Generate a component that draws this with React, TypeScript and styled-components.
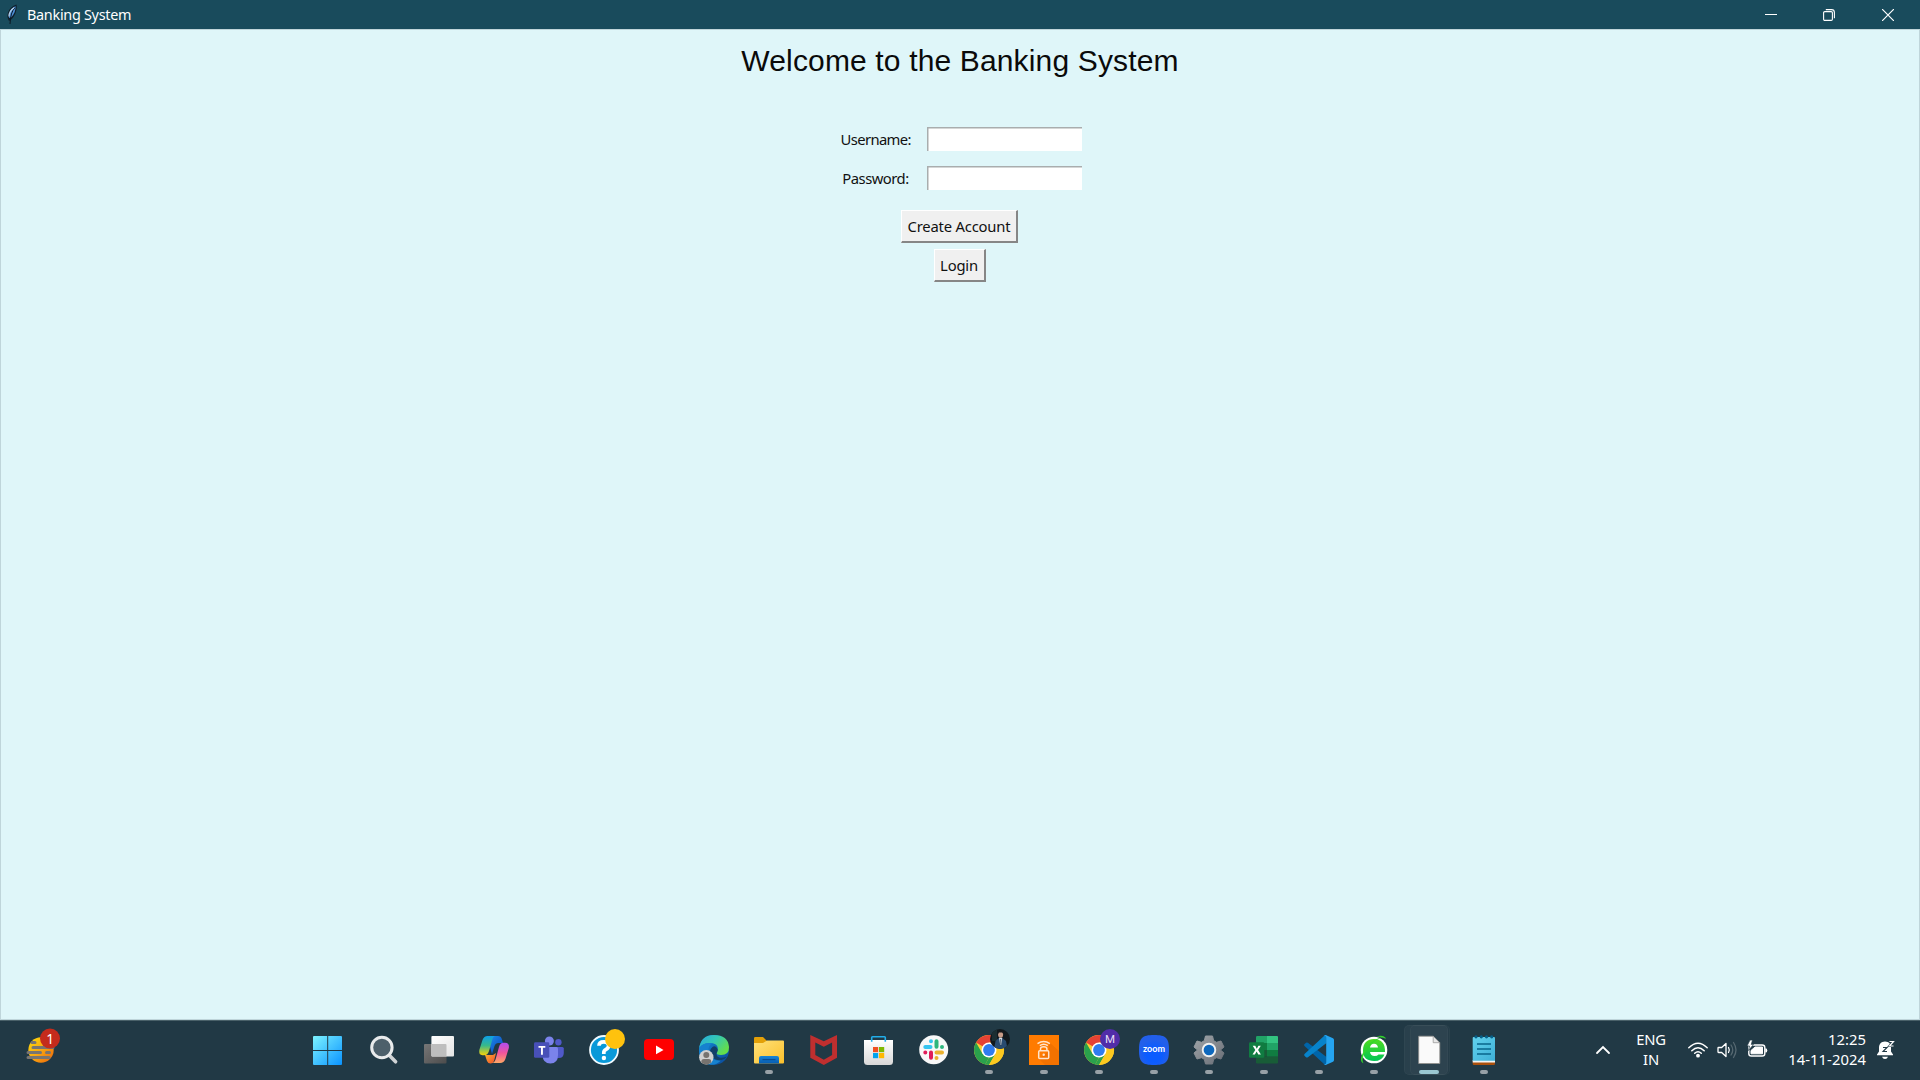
import React from 'react';
import styled, { createGlobalStyle } from 'styled-components';

const Global = createGlobalStyle`
  * { box-sizing: border-box; }
  body { margin: 0; overflow: hidden; background: #dff6f9; }
`;

const ui = '"Noto Sans", "Open Sans", sans-serif';

const Desktop = styled.div`
  width: 1920px;
  height: 1080px;
  display: flex;
  flex-direction: column;
  font-family: ${ui};
`;

const TitleBar = styled.header`
  height: 29px;
  flex: none;
  display: flex;
  align-items: center;
  background: #194b5c;
  color: #fff;
  padding: 0 3px 0 5px;
`;

const WindowTitle = styled.span`
  margin-left: 8px;
  flex: 1;
  font-size: 14.4px;
  line-height: 20px;
  letter-spacing: -0.28px;
`;

const Caption = styled.button`
  width: 58.5px;
  height: 28px;
  border: 0;
  padding: 0;
  background: none;
  display: flex;
  align-items: center;
  justify-content: center;
`;

const Client = styled.main`
  flex: 1;
  display: flex;
  flex-direction: column;
  align-items: center;
  background: #dff6f9;
  border: 1px solid #bfd5da;
`;

const Heading = styled.h1`
  margin: 13px 0 0;
  height: 36px;
  font: 400 30px/36px "Liberation Sans", Arial, sans-serif;
  letter-spacing: 0.15px;
  color: #0a0a0a;
`;

const Form = styled.form`
  display: grid;
  grid-template-columns: 70px 155px;
  column-gap: 16px;
  row-gap: 15px;
  margin: 48px 0 20px 2px;
`;

const Label = styled.label<{ $spacing: number }>`
  height: 24px;
  text-align: center;
  font-size: 14.8px;
  line-height: 24px;
  letter-spacing: ${p => p.$spacing}px;
  white-space: nowrap;
  color: #111;
`;

const Field = styled.input`
  width: 155px;
  height: 24px;
  padding: 0 3px;
  border: 0;
  border-radius: 0;
  outline: 0;
  background: #fff;
  box-shadow: inset 1.5px 1.5px 0 #a9adae;
`;

const PushButton = styled.button<{ $width: number }>`
  width: ${p => p.$width}px;
  height: 33px;
  margin: 0 1px 6px 0;
  padding: 0 0 1px;
  border: solid;
  border-width: 1px 2px 2px 1px;
  border-color: #fff #868686 #868686 #fff;
  background: #f0f0f0;
  font: 14.8px/20px ${ui};
  letter-spacing: -0.2px;
  white-space: nowrap;
  color: #111;
`;

const Taskbar = styled.footer`
  height: 60px;
  flex: none;
  display: flex;
  align-items: stretch;
  background: #213945;
  border-top: 1px solid #4a6169;
  color: #fff;
`;

const Widgets = styled.div`
  width: 301px;
  padding: 7px 0 0 25px;
`;

const Apps = styled.nav`
  display: flex;
  flex: 1;
`;

const Slot = styled.div`
  width: 55px;
  position: relative;
  padding: 14px 0 0 13px;
`;

const ActiveTile = styled.span<{ $back?: boolean }>`
  position: absolute;
  left: ${p => (p.$back ? 9 : 3)}px;
  top: 4px;
  width: ${p => (p.$back ? 40 : 44)}px;
  height: 50px;
  border-radius: 5px;
  background: rgba(255, 255, 255, ${p => (p.$back ? 0.02 : 0.04)});
  box-shadow: inset 0 0 0 1px rgba(255, 255, 255, 0.03);
`;

const Indicator = styled.span<{ $active?: boolean }>`
  display: block;
  position: relative;
  margin: 5px 0 0 ${p => (p.$active ? 5 : 11)}px;
  width: ${p => (p.$active ? 20 : 8)}px;
  height: 4px;
  border-radius: 2px;
  background: ${p => (p.$active ? '#9ac7d1' : '#98a1a7')};
`;

const Art = styled.svg`
  display: block;
  position: relative;
  overflow: visible;
`;

const Tray = styled.div`
  display: flex;
  padding-right: 25px;
`;

const TrayItem = styled.div<{ $w: number; $top: number; $gap?: number }>`
  width: ${p => p.$w}px;
  margin-left: ${p => p.$gap || 0}px;
  padding-top: ${p => p.$top}px;
`;

const TrayText = styled.div<{ $w: number; $right?: boolean }>`
  width: ${p => p.$w}px;
  padding-top: 8px;
  text-align: ${p => (p.$right ? 'right' : 'center')};
  font-size: 14.8px;
  line-height: 20px;
  letter-spacing: ${p => (p.$right ? 0.05 : -0.2)}px;
  white-space: nowrap;
`;

const Icon = ({ children }: { children: React.ReactNode }) => (
  <Art width="30" height="30" viewBox="0 0 30 30">{children}</Art>
);

const Gradient = ({ id, a, b, m, d = '1,1' }: { id: string; a: string; b: string; m?: string; d?: string }) => (
  <linearGradient id={id} x1="0" y1="0" x2={d.split(',')[0]} y2={d.split(',')[1]}>
    <stop offset="0" stopColor={a} />
    {m && <stop offset=".5" stopColor={m} />}
    <stop offset="1" stopColor={b} />
  </linearGradient>
);

const Start = () => (
  <Icon>
    <defs>
      <linearGradient id="win" gradientUnits="userSpaceOnUse" x1="-1" y1="1" x2="28" y2="30">
        <stop offset="0" stopColor="#7df3ff" /><stop offset="1" stopColor="#0a93ff" />
      </linearGradient>
    </defs>
    <path fill="url(#win)" d="M0 1h13.200v14H-1V2q0-1 1-1zM14.200 1H27q1 0 1 1v13H14.200zM-1 16h14.200v14H0q-1 0-1-1zM14.200 16H28v13q0 1-1 1H14.200z" />
  </Icon>
);

const Search = () => (
  <Icon>
    <path d="M20.5 20.5L26.6 26.8" stroke="#d0d3d5" strokeWidth="3.6" strokeLinecap="round" />
    <circle cx="12.9" cy="12.5" r="10.2" fill="#4d606b" stroke="#e9ebec" strokeWidth="3" />
  </Icon>
);

const TaskView = () => (
  <Icon>
    <defs><Gradient id="tv1" a="#fff" b="#e4e4e4" /><Gradient id="tv2" a="#777" b="#4c4c4c" /></defs>
    <rect y="9" width="22.5" height="19.6" rx="1" fill="url(#tv2)" />
    <rect x="7.4" y="1" width="22.6" height="20.4" rx="1" fill="url(#tv1)" />
    <path d="M7.4 9h14.1q1 0 1 1v11.4H8.4q-1 0-1-1z" fill="#bebebe" />
  </Icon>
);

const Copilot = () => (
  <Icon>
    <defs>
      <Gradient id="cp1" a="#0d9fe8" m="#38b98a" b="#f9d109" d="0,1" />
      <Gradient id="cp2" a="#b04df0" m="#f2549b" b="#ffa764" d="0,1" />
      <Gradient id="cp3" a="#1c90ee" b="#0a40b8" />
      <Gradient id="cp4" a="#ffb52e" b="#ef4a2c" />
    </defs>
    <path fill="url(#cp3)" d="M8 1h11q3 0 3.800 3l1.200 4h-4.500q-3 0-4 3L13 19z" />
    <path fill="url(#cp4)" d="M6 20h8l3-2-2 8q-1 2.500-3.500 2.500T8 26z" />
    <path fill="url(#cp1)" d="M8.500 1h8q-2.300 0-3.300 4L10 16q-1.200 4.200-5 4.200H3.600Q-.5 20.200.3 15L3.500 5Q5 1 8.500 1z" />
    <path fill="url(#cp2)" d="M21 28H12.700q2.800 0 4-4L20 12q1.200-4.200 4.500-4.200H26q4.500 0 3.900 5L26.400 24Q25 28 21 28z" />
  </Icon>
);

const Teams = () => (
  <Icon>
    <circle cx="24.400" cy="7.300" r="3.200" fill="#5059c9" />
    <path d="M21 12h7.300q1.500 0 1.500 1.500V18q0 5-5 5H21z" fill="#5059c9" />
    <circle cx="15.400" cy="6" r="4.500" fill="#7b83eb" />
    <path d="M9 12h13.500q1.500 0 1.500 1.500V20q0 8.500-7.600 8.500T8.500 20z" fill="#7b83eb" />
    <rect y="7.300" width="15.300" height="15.500" rx="1.400" fill="#4850b8" />
    <path d="M4.500 11h6.800v1.800H8.900v7H7v-7H4.500z" fill="#fff" />
  </Icon>
);

const Help = () => (
  <Icon>
    <circle cx="15" cy="15" r="14" fill="#0999d9" stroke="#f2fbff" strokeWidth="1.800" />
    <path d="M10 10.800q0-4 4.800-4t4.800 4q0 2.200-2.500 3.500T14.800 18v1" fill="none" stroke="#fff" strokeWidth="3.700" />
    <circle cx="14.900" cy="23" r="2.200" fill="#fff" />
    <circle cx="26" cy="4" r="10" fill="#ffc20e" />
  </Icon>
);

const YouTube = () => (
  <Icon><rect y="4" width="30" height="21" rx="4" fill="#fe0000" /><path d="M12 10.500v8.800l7.500-4.400z" fill="#fff" /></Icon>
);

const Edge = () => (
  <Icon>
    <defs><Gradient id="ed1" a="#27a9e1" m="#34c8b4" b="#65de48" d="1,.6" /><Gradient id="ed2" a="#1591dc" b="#0a4697" /></defs>
    <circle cx="15" cy="15" r="15" fill="url(#ed2)" />
    <path d="M.2 13Q2 0 15 0q14 0 15 12 .2 8-8 8-4.500 0-4.500-2.200c0-1 1.300-1.500 1.300-4C18.800 9.500 15 8 11 8 5 8 1.500 11 .2 13z" fill="url(#ed1)" />
    <path d="M.2 13C3 8.500 9 7 13.500 8.500 9 10 8.500 16 11 20c2.500 4.500 6 6 11 5.500-5 5.500-14 6-19 0Q-.5 20 .2 13z" fill="#1682cf" />
    <path d="M13.500 12q-4 3-1.500 8 3 5.500 10 5.200 3.500-.5 6-3.700-10 3.500-10.500-2.500c0-1.500 1.300-2 1.300-4.500q-2.300-5-5.300-2.500z" fill="#123f69" />
    <circle cx="7.300" cy="22.300" r="7.200" fill="#d0d0d0" />
    <circle cx="7.300" cy="20" r="3" fill="#77736f" /><path d="M2.300 27.400Q2 24 5 24h4.600q3 0 2.700 3.400-5 4-10 0z" fill="#77736f" />
  </Icon>
);

const Explorer = () => (
  <Icon>
    <defs><Gradient id="fx" a="#ffe17a" b="#fbc02b" /><Gradient id="fb" a="#1685d8" b="#075cb0" d="0,1" /></defs>
    <path d="M0 3.200Q0 2 1.200 2H9l3.500 3.500V10H0z" fill="#e3a008" />
    <path d="M0 8h9l4-2.500h16q1 0 1 1v21q0 1-1 1H1q-1 0-1-1z" fill="url(#fx)" />
    <path d="M5 28.500V23q0-2 2-2h16q2 0 2 2v5.500z" fill="url(#fb)" /><path d="M8.500 24.700h13" stroke="#07458b" strokeWidth="1" />
  </Icon>
);

const McAfee = () => (
  <Icon><path fillRule="evenodd" fill="#c02f2f" d="M1.300 0L14.800 6.300 28 0v22.800L14.800 30 1.300 22.800zM6.300 7.600v12.500l8.500 4.600 8.300-4.600V7.600l-8.300 4.200z" /></Icon>
);

const Store = () => (
  <Icon>
    <defs><Gradient id="st" a="#fff" b="#d8d8d8" d="0,1" /></defs>
    <path d="M0 5h29v21.500q0 3.500-3.500 3.500h-22Q0 30 0 26.500z" fill="url(#st)" />
    <path d="M7.700 6.800V2.500q0-.8.800-.8h12q.8 0 .8.800v4.300" fill="none" stroke="#22aeea" strokeWidth="1.600" />
    <path d="M9 12h5.200v5.200H9z" fill="#f05022" /><path d="M15 12h5.200v5.200H15z" fill="#7eb902" />
    <path d="M9 18h5.200v5.200H9z" fill="#00a3ee" /><path d="M15 18h5.200v5.200H15z" fill="#ffb801" />
  </Icon>
);

const Slack = () => (
  <Icon>
    <circle cx="14.700" cy="14.700" r="14.500" fill="#f8f8f8" />
    <g strokeLinecap="round" strokeWidth="4">
      <path d="M6.300 12h5.200M12 6.300h0" stroke="#36c5f0" /><path d="M17.500 6.300v5.500M23 12h0" stroke="#2eb67d" />
      <path d="M12 17.500v5.300M6.300 17.500h0" stroke="#e01e5a" /><path d="M17.500 17.500H23M17.500 23h0" stroke="#ecb22e" />
    </g>
  </Icon>
);

const ChromeBase = () => (
  <>
    <circle cx="15" cy="15" r="15" fill="#ffcd35" />
    <path d="M15 15L2.010 7.500A15 15 0 0 1 27.990 7.500H15z" fill="#e64234" />
    <path d="M15 15V22.500L11.250 29.500A15 15 0 0 1 2.010 7.500L8.500 18.750z" fill="#2aa14c" />
    <path d="M11.250 29.500A15 15 0 0 0 15 30L21.500 18.750 15 22.500z" fill="#2aa14c" />
    <path d="M15 7.500h13A15 15 0 0 1 15 30l6.500-11.250z" fill="#fcc91f" />
    <circle cx="15" cy="15" r="7.500" fill="#fff" /><circle cx="15" cy="15" r="5.900" fill="#2f7cee" />
  </>
);

const ChromePhoto = () => (
  <Icon>
    <ChromeBase />
    <clipPath id="photo"><circle cx="26" cy="4" r="10" /></clipPath>
    <g clipPath="url(#photo)">
      <path d="M16-6h20v20H16z" fill="#10191e" /><path d="M18-5h5v11h-5z" fill="#1b2e32" />
      <path d="M20 14l1.500-8L25 2.800h3L32 6l1.500 8z" fill="#284b70" />
      <path d="M25 2.800h3.200L27.400 10h-1.200z" fill="#d5dfe7" /><path d="M26.300 4h.8l.3 6-.8 1z" fill="#26384b" />
      <ellipse cx="26.600" cy="-.5" rx="2.500" ry="3.300" fill="#c79c88" /><path d="M24-1q0-3.700 2.700-3.700T29.200-1l-1-1.500h-3z" fill="#15171a" />
    </g>
  </Icon>
);

const ChromeM = () => (
  <Icon>
    <ChromeBase /><circle cx="26" cy="4" r="10" fill="#512da8" />
    <text x="26" y="8.200" textAnchor="middle" fontFamily="Roboto, sans-serif" fontSize="11.500" fill="#e4dcf5">M</text>
  </Icon>
);

const Authenticator = () => (
  <Icon>
    <path d="M0 0h30v30H0z" fill="#ff7b00" /><path d="M20 7l10 9v14H16l-6-6 10-8z" fill="#f27200" />
    <g fill="none" stroke="#ffe5cc" strokeWidth="1.500">
      <rect x="9.700" y="15.700" width="10" height="7.700" rx="1" /><path d="M11.500 15.500v-1.700q0-2 3.200-2t3.200 2v1.700" />
      <path d="M10.800 10.700q4-2.800 8 0M8.500 8.700q6.200-4.200 12.400 0" />
    </g><circle cx="14.700" cy="19.700" r="1.200" fill="#ffe5cc" />
  </Icon>
);

const Zoom = () => (
  <Icon>
    <defs><radialGradient id="zm" cy=".65"><stop offset=".5" stopColor="#0b5cff" /><stop offset="1" stopColor="#225fea" /></radialGradient></defs>
    <path d="M15 0c12 0 15 3 15 15s-3 15-15 15S0 27 0 15 3 0 15 0z" fill="url(#zm)" />
    <text x="15" y="17" textAnchor="middle" textLength="22" lengthAdjust="spacingAndGlyphs" fontFamily="Lato, sans-serif" fontSize="8.800" fontWeight="700" fill="#fff">zoom</text>
  </Icon>
);

const Settings = () => (
  <Icon>
    <defs><Gradient id="gr" a="#a1a6aa" b="#686d75" /></defs>
    <path d="M11.500 1h7l1.200 4.700 2.800 1.600L27 6l3 6-3.500 3L30 18l-3 6-4.500-1.300-2.800 1.600L18.500 29h-7l-1.200-4.700-2.800-1.600L3 24l-3-6 3.500-3L0 12l3-6 4.500 1.300 2.800-1.600z" fill="url(#gr)" stroke="url(#gr)" strokeWidth="1" strokeLinejoin="round" />
    <circle cx="15" cy="15" r="6.300" fill="#0e68bd" stroke="#f0f1f1" strokeWidth="1.900" />
  </Icon>
);

const Excel = () => (
  <Icon>
    <path d="M8.200 1H18v7H7V2.200Q7 1 8.200 1z" fill="#21a366" /><path d="M18 1h10q1 0 1 1v6H18z" fill="#33c481" />
    <path d="M7 8h11v7H7z" fill="#107c41" /><path d="M18 8h11v7H18z" fill="#21a366" />
    <path d="M7 15h11v6.700H7z" fill="#185c37" /><path d="M18 15h11v6.700H18z" fill="#107c41" />
    <path d="M7 21.700h22v5.500q0 1.200-1.200 1.200H8.200Q7 28.400 7 27.200z" fill="#185c37" />
    <rect y="7.300" width="15.300" height="15.500" rx="1.300" fill="#107c41" />
    <path d="M3.700 10.700h2.600l1.500 3 1.600-3h2.400l-2.700 4.400 2.800 4.500H9.300l-1.700-3-1.700 3H3.500l2.800-4.500z" fill="#fff" />
  </Icon>
);

const VSCode = () => (
  <Icon>
    <path d="M.5 9.300L2 7.800q.9-.7 1.900 0L22.500 22v7.700Q21 29.900 20 29L.5 11.100q-.8-.9 0-1.800z" fill="#0065a9" />
    <path d="M.5 20.700L2 22.200q.9.700 1.900 0L22.500 8V.3Q21 .1 20 1L.5 18.900q-.8.900 0 1.800z" fill="#0783cb" />
    <path d="M22.200.2L29 3.300q1 .6 1 1.800v19.800q0 1.200-1 1.800l-6.800 3.100q-1.500.4-2.500-.9 2.500 1 2.500-1.400v-25q0-2.300-2.500-1.400 1-1.300 2.500-.9z" fill="#25a5f1" />
  </Icon>
);

const GreenE = () => (
  <Icon>
    <defs><Gradient id="ge" a="#50db1f" b="#00c655" d="0,1" /></defs>
    <circle cx="15" cy="15" r="13.300" fill="#fff" />
    <path fillRule="evenodd" fill="url(#ge)" d="M4 15.500C4 8 8.300 4 15 4c7.500 0 11.500 5 11 13H11q.7 4 4.500 4 2.800 0 4-1.600h6Q23 26 15.300 26 4 26 4 15.500zM11 12.500h8q-.5-3.800-4-3.800t-4 3.800z" />
    <path d="M4.500 28.200C.5 27 1.500 21 6 14.500 12 6 20 .8 27.500 2.500 20 2 13 7 8 14c-4 6-5.500 11-3.500 14.200z" fill="#31d52b" />
    <path d="M17 1.500q8-2.500 10 2.500Q23 1 17 1.500z" fill="#31d52b" />
  </Icon>
);

const FileIcon = () => (
  <Icon>
    <path d="M4.700 1.200h14.600l6.500 6.500v20.800H4.700z" fill="#fafafa" stroke="#92908d" strokeWidth=".8" />
    <path d="M19.200 1.200v6.500h6.500z" fill="#e7e7e7" stroke="#999" strokeWidth=".8" />
  </Icon>
);

const Notepad = () => (
  <Icon>
    <defs><Gradient id="np" a="#62d2ee" b="#3eafd6" /></defs>
    <path d="M3.700 26h22.300v2.800q0 1.200-1.200 1.200H5q-1.300 0-1.300-1.200z" fill="#aa500c" /><path d="M3.700 25h22.300v2.500H3.700z" fill="#f0f4f5" />
    <path d="M4.700 2h20.300q1 0 1 1v22.800H3.700V3q0-1 1-1z" fill="url(#np)" />
    <path d="M7 1.800h0M12.300 1.800h0M17.500 1.800h0M22.700 1.800h0" stroke="#075f87" strokeWidth="3.200" strokeLinecap="round" />
    <path d="M8 9h14M8 14h14M8 19h14" stroke="#08658c" strokeWidth="1.700" />
  </Icon>
);

type TaskbarApp = { name: string; Art: () => React.ReactElement; running?: boolean; active?: boolean };
const apps: TaskbarApp[] = [
  { name: 'start', Art: Start }, { name: 'search', Art: Search }, { name: 'taskview', Art: TaskView },
  { name: 'copilot', Art: Copilot }, { name: 'teams', Art: Teams }, { name: 'help', Art: Help },
  { name: 'youtube', Art: YouTube }, { name: 'edge', Art: Edge }, { name: 'explorer', Art: Explorer, running: true },
  { name: 'mcafee', Art: McAfee }, { name: 'store', Art: Store }, { name: 'slack', Art: Slack },
  { name: 'chrome', Art: ChromePhoto, running: true }, { name: 'auth', Art: Authenticator, running: true },
  { name: 'chrome-m', Art: ChromeM, running: true }, { name: 'zoom', Art: Zoom, running: true },
  { name: 'settings', Art: Settings, running: true }, { name: 'excel', Art: Excel, running: true },
  { name: 'vscode', Art: VSCode, running: true }, { name: 'browser', Art: GreenE, running: true },
  { name: 'file', Art: FileIcon, running: true, active: true }, { name: 'notepad', Art: Notepad, running: true },
];

const Feather = () => (
  <svg width="14" height="22" viewBox="0 0 14 22">
    <path d="M4 17C.5 12 3 3 11.500.5c1 5-1.500 12.500-6 15.500z" fill="#10202c" />
    <path d="M4 14Q3.500 6 10.500 2q.5 6.500-4.500 11.500z" fill="#4d8fd8" />
    <path d="M9.800 4Q5.500 8 5 20" fill="none" stroke="#0b1722" strokeWidth="1" />
    <path d="M4 12.500Q4 7 9 3.800" fill="none" stroke="#b6d3ee" strokeWidth="1.300" />
  </svg>
);

export default function App() {
  return (
    <Desktop>
      <Global />
      <TitleBar>
        <Feather />
        <WindowTitle>Banking System</WindowTitle>
        <Caption><svg width="12" height="12"><path d="M0 5.500h12" stroke="#fff" /></svg></Caption>
        <Caption>
          <svg width="12" height="12" fill="none" stroke="#fff" strokeWidth="1.100">
            <path d="M2.800.6h5.700q2.900 0 2.900 2.900v5.700" /><rect x=".6" y="2.600" width="8.800" height="8.800" rx="1.200" />
          </svg>
        </Caption>
        <Caption><svg width="12" height="12"><path d="M0 0l12 12M12 0L0 12" stroke="#fff" strokeWidth="1.200" /></svg></Caption>
      </TitleBar>
      <Client>
        <Heading>Welcome to the Banking System</Heading>
        <Form>
          <Label htmlFor="user" $spacing={-0.62}>Username:</Label><Field id="user" />
          <Label htmlFor="pass" $spacing={-0.5}>Password:</Label><Field id="pass" type="password" />
        </Form>
        <PushButton $width={117}>Create Account</PushButton>
        <PushButton $width={52}>Login</PushButton>
      </Client>
      <Taskbar>
        <Widgets>
          <Art width="36" height="36" viewBox="0 0 36 36">
            <defs><Gradient id="sun" a="#ffdf08" m="#f9a610" b="#e9620b" /></defs>
            <circle cx="16" cy="22" r="12.700" fill="url(#sun)" />
            <path d="M7 14.500h3M8 19.500h20M3 24.500h12.500M21.500 24.500h3M3 29.500h21" stroke="#797571" strokeWidth="3" strokeLinecap="round" />
            <circle cx="25" cy="10.500" r="10" fill="#c42b1c" />
            <text x="25.200" y="15.600" textAnchor="middle" fontFamily="Noto Sans, sans-serif" fontSize="13.800" fill="#fff">1</text>
          </Art>
        </Widgets>
        <Apps>
          {apps.map(a => (
            <Slot key={a.name}>
              {a.active && <><ActiveTile $back /><ActiveTile /></>}
              <a.Art />
              {a.running && <Indicator $active={a.active} />}
            </Slot>
          ))}
        </Apps>
        <Tray>
          <TrayItem $w={34} $top={24}>
            <Art width="14" height="9" viewBox="0 0 14 9"><path d="M1 8l6-6 6 6" fill="none" stroke="#fff" strokeWidth="1.800" strokeLinecap="round" /></Art>
          </TrayItem>
          <TrayText $w={42}>ENG<br />IN</TrayText>
          <TrayItem $w={29} $top={20} $gap={16}>
            <Art width="20" height="17" viewBox="0 0 20 17">
              <path d="M.8 6.800q9.200-9 18.400 0M3.800 9.700q6.200-6 12.400 0M6.700 12.300q3.300-3.200 6.600 0" fill="none" stroke="#fff" strokeWidth="1.500" strokeLinecap="round" />
              <circle cx="10" cy="14.700" r="1.900" fill="#fff" />
            </Art>
          </TrayItem>
          <TrayItem $w={30} $top={20}>
            <Art width="21" height="18" viewBox="0 0 21 18" fill="none" strokeWidth="1.300" strokeLinecap="round" strokeLinejoin="round">
              <path d="M1.500 6.500h3.200L9 2.500v13l-4.300-4H1.500q-.5 0-.5-.5V7q0-.5.500-.5zM11.500 6.500q1.600 2.500 0 5" stroke="#fff" />
              <path d="M14 4q3.500 5 0 10M16.500 1.500q5 7.500 0 15" stroke="#566871" />
            </Art>
          </TrayItem>
          <TrayItem $w={37} $top={19}>
            <Art width="20" height="18" viewBox="0 0 20 18">
              <rect x="1.800" y="5" width="16" height="11" rx="2.600" fill="none" stroke="#fff" strokeWidth="1.400" />
              <path d="M4 13.800V10.500l4-3.500h7.500v6.800z" fill="#fff" stroke="#fff" strokeLinejoin="round" />
              <path d="M18.300 8.200q2 0 2 2.200t-2 2.200z" fill="#fff" />
              <path d="M3 0L0 6h2.500L1.500 10.500 6.500 4.500H4.300L5.500 0z" fill="#fff" stroke="#213945" strokeWidth=".7" />
            </Art>
          </TrayItem>
          <TrayText $w={82} $right>12:25<br />14-11-2024</TrayText>
          <TrayItem $w={18} $top={19} $gap={11}>
            <Art width="18" height="20" viewBox="0 0 18 20">
              <path d="M8 1.500c4 0 6 2.800 6 6v4l2 3v.8H0v-.8l2-3v-4c0-3.200 2-6 6-6z" fill="#fff" /><path d="M5 16.800h6q-.8 2.300-3 2.300t-3-2.300z" fill="#fff" />
              <path d="M6 7.500h4l-4 4h4" fill="none" stroke="#213945" strokeWidth="1.100" />
              <path d="M12.500 1.500h4L12.500 6h4" fill="none" stroke="#213945" strokeWidth="2.200" /><path d="M12.500 1.500h4L12.500 6h4" fill="none" stroke="#fff" strokeWidth="1.200" />
            </Art>
          </TrayItem>
        </Tray>
      </Taskbar>
    </Desktop>
  );
}
